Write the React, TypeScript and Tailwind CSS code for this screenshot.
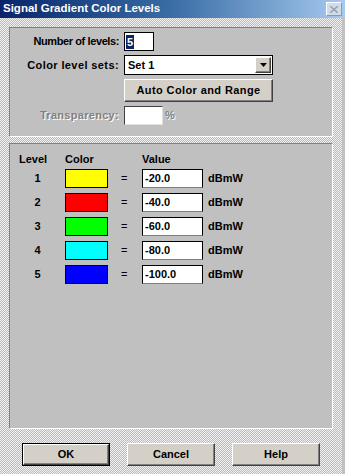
const levels = [
  { n: 1, color: 'bg-[#ffff00]', value: '-20.0' },
  { n: 2, color: 'bg-[#ff0000]', value: '-40.0' },
  { n: 3, color: 'bg-[#00ff00]', value: '-60.0' },
  { n: 4, color: 'bg-[#00ffff]', value: '-80.0' },
  { n: 5, color: 'bg-[#0000ff]', value: '-100.0' },
];

const raised =
  'bg-[#d4d0c8] border border-t-white border-l-white border-b-[#404040] border-r-[#404040] shadow-[inset_-1px_-1px_#808080]';

const App = () => {
  return (
    <div
      className="w-[345px] h-[474px] flex flex-col overflow-hidden text-[11px] font-bold text-black"
      style={{ fontFamily: '"Liberation Sans", Arial, sans-serif' }}
    >
      {/* title bar */}
      <div className="h-[18px] shrink-0 flex items-center justify-between pl-[3px] pr-[3px] bg-gradient-to-r from-[#0a246a] via-[#3a6ea5] to-[#a6caf0]">
        <span className="text-white text-[11.5px] font-bold leading-none">Signal Gradient Color Levels</span>
        <div className="w-[16px] h-[14px] flex items-center justify-center bg-[#cfdcea] border border-t-white border-l-white border-b-[#8a99ab] border-r-[#8a99ab]">
          <svg width="8" height="7" viewBox="0 0 8 7">
            <path d="M0 0L8 7M8 0L0 7" stroke="#9aa3ad" strokeWidth="1.6" />
          </svg>
        </div>
      </div>

      {/* body */}
      <div className="flex-1 flex flex-col px-[9px] pt-[9px] bg-[repeating-conic-gradient(#b8b8b8_0_25%,#f4f4f4_0_50%)] bg-[length:2px_2px] border-r-[3px] border-r-[#c0c0c0]">
        {/* top group */}
        <div className="h-[110px] shrink-0 bg-[#c0c0c0] border border-t-[#808080] border-l-[#808080] border-b-white border-r-white flex flex-col pt-[4px] gap-[4px]">
          <div className="flex items-center h-[19px]">
            <span className="w-[110px] text-right pr-[1px] tracking-[-0.4px]">Number of levels:</span>
            <div className="ml-[4px] w-[30px] h-[19px] bg-white border border-black flex items-center pl-[1px]">
              <span className="bg-[#0a246a] text-white px-[1px] leading-[14px]">5</span>
            </div>
          </div>
          <div className="flex items-center h-[20px]">
            <span className="w-[110px] text-right pr-[1px] tracking-[0.4px]">Color level sets:</span>
            <div className="ml-[4px] w-[149px] h-[20px] bg-white border border-black flex items-center justify-between pl-[3px] pr-[1px]">
              <span>Set 1</span>
              <div className={`w-[16px] h-[16px] flex items-center justify-center ${raised}`}>
                <svg width="7" height="4" viewBox="0 0 7 4">
                  <path d="M0 0H7L3.5 4Z" fill="#000" />
                </svg>
              </div>
            </div>
          </div>
          <div className="flex items-center h-[23px]">
            <div className="w-[110px]" />
            <div className={`ml-[4px] w-[149px] h-[23px] flex items-center justify-center tracking-[0.4px] ${raised}`}>
              Auto Color and Range
            </div>
          </div>
          <div className="flex items-center h-[19px]">
            <span className="w-[110px] text-right pr-[1px] tracking-[0.3px] text-[#808080] [text-shadow:1px_1px_0_#fff]">Transparency:</span>
            <div className="ml-[4px] w-[39px] h-[19px] bg-white border border-t-[#404040] border-l-[#404040] border-b-[#e0e0e0] border-r-[#e0e0e0]" />
            <span className="ml-[2px] text-[#808080] [text-shadow:1px_1px_0_#fff]">%</span>
          </div>
        </div>

        {/* levels group */}
        <div className="mt-[6px] h-[286px] shrink-0 bg-[#c0c0c0] border border-t-[#808080] border-l-[#808080] border-b-white border-r-white flex flex-col pt-[7px]">
          <div className="flex items-center h-[16px]">
            <span className="w-[48px] pl-[9px]">Level</span>
            <span className="w-[84px] pl-[7px]">Color</span>
            <span>Value</span>
          </div>
          <div className="flex flex-col gap-[5px] mt-[2px]">
            {levels.map((l) => (
              <div key={l.n} className="flex items-center h-[19px]">
                <span className="w-[55px] text-center">{l.n}</span>
                <div className={`w-[43px] h-[19px] border border-black ${l.color}`} />
                <span className="ml-[13px] w-[21px] font-normal">=</span>
                <div className="w-[61px] h-[19px] bg-white border border-t-black border-l-black border-b-[#808080] border-r-black flex items-center pl-[2px]">
                  {l.value}
                </div>
                <span className="ml-[5px]">dBmW</span>
              </div>
            ))}
          </div>
        </div>

        {/* buttons */}
        <div className="flex items-start mt-[14px] pl-[13px]">
          <div className="w-[88px] h-[23px] border border-black">
            <div className={`w-full h-full flex items-center justify-center ${raised}`}>OK</div>
          </div>
          <div className={`ml-[17px] w-[88px] h-[23px] flex items-center justify-center ${raised}`}>Cancel</div>
          <div className={`ml-[17px] w-[88px] h-[23px] flex items-center justify-center ${raised}`}>Help</div>
        </div>
      </div>
    </div>
  );
};

export default App;
